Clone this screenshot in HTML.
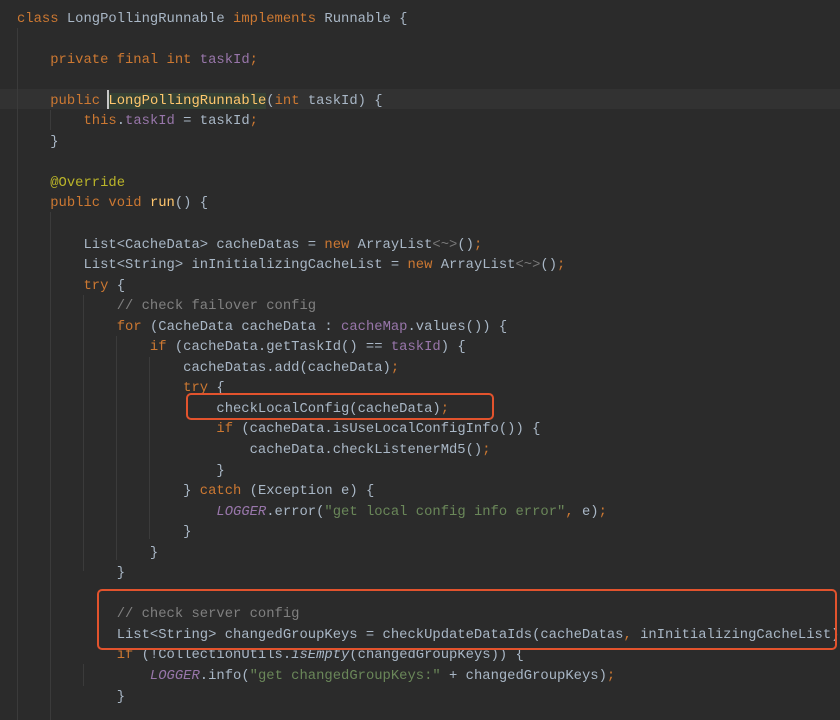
<!DOCTYPE html>
<html><head><meta charset="utf-8"><style>
html,body{margin:0;padding:0;width:840px;height:720px;overflow:hidden;background:#2b2b2b;}
#c{position:absolute;left:17px;top:8.5px;font-family:"Liberation Mono",monospace;font-size:13.85px;line-height:20.55px;color:#a9b7c6;white-space:pre;}
.k{color:#cc7832}.f{color:#9876aa}.fi{color:#9876aa;font-style:italic}.cm{color:#808080}.s{color:#6a8759}.a{color:#bbb529}.m{color:#ffc66d}.i{font-style:italic}.g{color:#787878}
.hl{position:absolute;left:0;top:89px;width:840px;height:20px;background:#323232}
.guide{position:absolute;width:1px;background:#3b3b3b}
.box{position:absolute;border:2.5px solid #e2532d;border-radius:5px;box-sizing:border-box}
</style></head><body>
<div class="hl"></div>
<div class="guide" style="left:17px;top:28px;height:692px"></div>
<div class="guide" style="left:50px;top:110px;height:20px"></div>
<div class="guide" style="left:50px;top:212px;height:508px"></div>
<div class="guide" style="left:83px;top:295px;height:276px"></div>
<div class="guide" style="left:116px;top:336px;height:224px"></div>
<div class="guide" style="left:149px;top:357px;height:182px"></div>
<div class="guide" style="left:83px;top:664px;height:22px"></div>
<div id="c"><span class="k">class</span> LongPollingRunnable <span class="k">implements</span> Runnable {

    <span class="k">private final int</span> <span class="f">taskId</span><span class="k">;</span>

    <span class="k">public</span> <span class="m" style="background:#344134">LongPollingRunnable</span>(<span class="k">int</span> taskId) {
        <span class="k">this</span>.<span class="f">taskId</span> = taskId<span class="k">;</span>
    }

    <span class="a">@Override</span>
    <span class="k">public void</span> <span class="m">run</span>() {

        List&lt;CacheData&gt; cacheDatas = <span class="k">new</span> ArrayList<span class="g">&lt;~&gt;</span>()<span class="k">;</span>
        List&lt;String&gt; inInitializingCacheList = <span class="k">new</span> ArrayList<span class="g">&lt;~&gt;</span>()<span class="k">;</span>
        <span class="k">try</span> {
            <span class="cm">// check failover config</span>
            <span class="k">for</span> (CacheData cacheData : <span class="f">cacheMap</span>.values()) {
                <span class="k">if</span> (cacheData.getTaskId() == <span class="f">taskId</span>) {
                    cacheDatas.add(cacheData)<span class="k">;</span>
                    <span class="k">try</span> {
                        checkLocalConfig(cacheData)<span class="k">;</span>
                        <span class="k">if</span> (cacheData.isUseLocalConfigInfo()) {
                            cacheData.checkListenerMd5()<span class="k">;</span>
                        }
                    } <span class="k">catch</span> (Exception e) {
                        <span class="fi">LOGGER</span>.error(<span class="s">"get local config info error"</span><span class="k">,</span> e)<span class="k">;</span>
                    }
                }
            }

            <span class="cm">// check server config</span>
            List&lt;String&gt; changedGroupKeys = checkUpdateDataIds(cacheDatas<span class="k">,</span> inInitializingCacheList)<span class="k">;</span>
            <span class="k">if</span> (!CollectionUtils.<span class="i">isEmpty</span>(changedGroupKeys)) {
                <span class="fi">LOGGER</span>.info(<span class="s">"get changedGroupKeys:"</span> + changedGroupKeys)<span class="k">;</span>
            }
</div>
<div style="position:absolute;left:107px;top:90px;width:2px;height:19px;background:#c8c8c8"></div>
<div class="box" style="left:186px;top:393px;width:308px;height:27px"></div>
<div class="box" style="left:97px;top:589px;width:740px;height:61px"></div>
</body></html>
